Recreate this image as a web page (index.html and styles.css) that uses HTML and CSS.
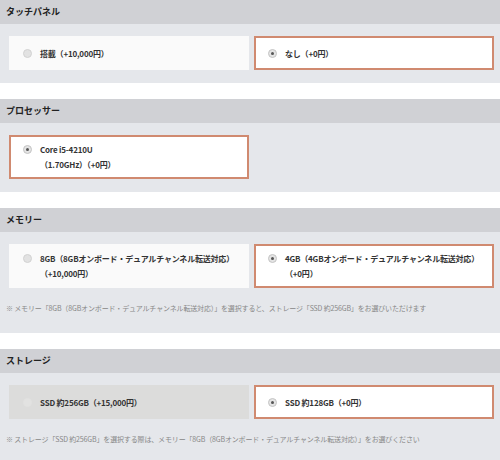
FILE: index.html
```html
<!DOCTYPE html>
<html lang="ja">
<head>
    <meta charset="UTF-8">
    <meta name="viewport" content="width=device-width, initial-scale=1.0">
    <title>カスタマイズ</title>
    <link rel="stylesheet" href="styles.css">
</head>
<body>

    <div class="spec-section">
        <h2 class="spec-title">タッチパネル</h2>
        <div class="spec-body">
            <div class="options">
                <label class="option">
                    <span class="radio"></span>
                    <span class="option-text">搭載（+10,000円）</span>
                </label>
                <label class="option selected">
                    <span class="radio"></span>
                    <span class="option-text">なし（+0円）</span>
                </label>
            </div>
        </div>
    </div>

    <div class="spec-section">
        <h2 class="spec-title">プロセッサー</h2>
        <div class="spec-body">
            <div class="options">
                <label class="option selected tall">
                    <span class="radio"></span>
                    <span class="option-text">Core i5-4210U<br>（1.70GHz）（+0円）</span>
                </label>
            </div>
        </div>
    </div>

    <div class="spec-section">
        <h2 class="spec-title">メモリー</h2>
        <div class="spec-body">
            <div class="options">
                <label class="option tall">
                    <span class="radio"></span>
                    <span class="option-text">8GB（8GBオンボード・デュアルチャンネル転送対応）<br>（+10,000円）</span>
                </label>
                <label class="option selected tall">
                    <span class="radio"></span>
                    <span class="option-text">4GB（4GBオンボード・デュアルチャンネル転送対応）<br>（+0円）</span>
                </label>
            </div>
            <p class="note">※ メモリー「8GB（8GBオンボード・デュアルチャンネル転送対応）」を選択すると、ストレージ「SSD 約256GB」をお選びいただけます</p>
        </div>
    </div>

    <div class="spec-section">
        <h2 class="spec-title">ストレージ</h2>
        <div class="spec-body">
            <div class="options">
                <label class="option disabled">
                    <span class="radio"></span>
                    <span class="option-text">SSD 約256GB（+15,000円）</span>
                </label>
                <label class="option selected">
                    <span class="radio"></span>
                    <span class="option-text">SSD 約128GB（+0円）</span>
                </label>
            </div>
            <p class="note">※ ストレージ「SSD 約256GB」を選択する際は、メモリー「8GB（8GBオンボード・デュアルチャンネル転送対応）」をお選びください</p>
        </div>
    </div>

</body>
</html>
```

FILE: styles.css
```css
body {
    font-family: "Noto Sans CJK JP", "Noto Sans", sans-serif;
    background-color: #ffffff;
    margin: 0;
    color: #333333;
}
.spec-section {
    margin-bottom: 16px;
}
.spec-title {
    margin: 0;
    height: 24px;
    line-height: 24px;
    padding-left: 6px;
    background-color: #d0d1d5;
    color: #222222;
    font-size: 9px;
    font-weight: bold;
}
.spec-body {
    background-color: #e5e7eb;
    padding: 12px 6px 13px 9px;
}
.options {
    display: grid;
    grid-template-columns: 240px 240px;
    gap: 5px;
}
.option {
    display: flex;
    align-items: center;
    height: 34px;
    padding-left: 12px;
    box-sizing: border-box;
    background-color: #fafafa;
    border: 2px solid transparent;
    font-size: 8px;
    font-weight: bold;
    line-height: 15px;
    letter-spacing: -0.2px;
    cursor: pointer;
}
.option.tall {
    height: 44px;
    align-items: flex-start;
    padding-top: 5px;
}
.option.selected {
    background-color: #ffffff;
    border-color: #d08a70;
}
.option.disabled {
    background-color: #dcdcdb;
    cursor: default;
}
.radio {
    width: 7px;
    height: 7px;
    border-radius: 50%;
    background-color: #e2e2e2;
    border: 1px solid #d2d2d2;
    margin-right: 8px;
    flex-shrink: 0;
    position: relative;
}
.option.tall .radio {
    margin-top: 3px;
}
.option.selected .radio {
    background-color: #e4e4e4;
    border-color: #c4c4c4;
}
.option.selected .radio::after {
    content: "";
    position: absolute;
    left: 2px;
    top: 2px;
    width: 3px;
    height: 3px;
    border-radius: 50%;
    background-color: #555555;
}
.option.disabled .radio {
    background-color: #e2e2e1;
    border-color: #e2e2e1;
}
.note {
    margin: 14px 0 6px -3px;
    font-size: 7px;
    line-height: 12px;
    letter-spacing: -0.15px;
    color: #888888;
}
```
